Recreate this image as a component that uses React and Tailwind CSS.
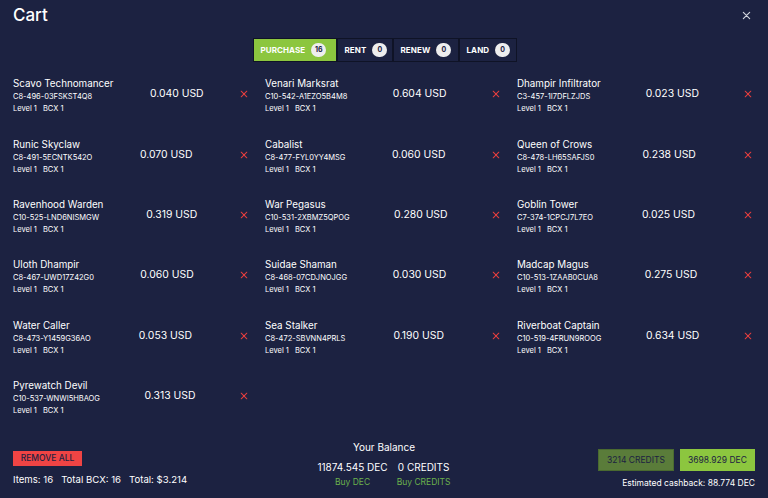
import React from "react";

const items = [
  ["Scavo Technomancer", "C8-496-03FSKST4Q8", "0.040"],
  ["Venari Marksrat", "C10-542-A1EZO5B4M8", "0.604"],
  ["Dhampir Infiltrator", "C3-457-1I7DFLZJDS", "0.023"],
  ["Runic Skyclaw", "C8-491-5ECNTK542O", "0.070"],
  ["Cabalist", "C8-477-FYL0YY4MSG", "0.060"],
  ["Queen of Crows", "C8-478-LH65SAFJS0", "0.238"],
  ["Ravenhood Warden", "C10-525-LND6NISMGW", "0.319"],
  ["War Pegasus", "C10-531-2XBMZ5QPOG", "0.280"],
  ["Goblin Tower", "C7-374-1CPCJ7L7EO", "0.025"],
  ["Uloth Dhampir", "C8-467-UWD17Z42G0", "0.060"],
  ["Suidae Shaman", "C8-468-07CDJNOJGG", "0.030"],
  ["Madcap Magus", "C10-513-1ZAAB0CUA8", "0.275"],
  ["Water Caller", "C8-473-Y1459G36AO", "0.053"],
  ["Sea Stalker", "C8-472-SBVNN4PRLS", "0.190"],
  ["Riverboat Captain", "C10-519-4FRUN9ROOG", "0.634"],
  ["Pyrewatch Devil", "C10-537-WNWI5HBAOG", "0.313"],
];

function XIcon({ className }) {
  return (
    <svg viewBox="0 0 10 10" className={className} fill="none" stroke="currentColor" strokeWidth="1.3" strokeLinecap="round">
      <path d="M1.5 1.5 L8.5 8.5 M8.5 1.5 L1.5 8.5" />
    </svg>
  );
}

function Tab({ label, count, active }) {
  return (
    <div
      className={
        "flex items-center gap-[6px] px-[7px] h-[24px] border border-[#0f1326] " +
        (active ? "bg-[#8cc63f]" : "bg-[#1c2241]")
      }
    >
      <span className="text-[8px] font-bold text-white tracking-[0.01em]">{label}</span>
      <span className="min-w-[15px] h-[14px] px-[3px] rounded-full bg-[#eeeeee] text-[#1c2241] text-[7px] font-bold flex items-center justify-center">
        {count}
      </span>
    </div>
  );
}

export default function App() {
  return (
    <div
      className="w-[768px] h-[498px] bg-[#1c2241] text-white flex flex-col overflow-hidden"
      style={{ fontFamily: "Inter, 'Liberation Sans', sans-serif" }}
    >
      <div className="flex items-center justify-between pl-[13px] pr-[17px] h-[32px]">
        <div className="text-[17px] font-medium leading-none">Cart</div>
        <XIcon className="w-[9px] h-[9px] text-[#d0d3dc]" />
      </div>

      <div className="flex justify-center mt-[7px] ml-[1px]">
        <div className="flex">
          <div className="w-[84px]"><Tab label="PURCHASE" count="16" active /></div>
          <div className="w-[56px]"><Tab label="RENT" count="0" /></div>
          <div className="w-[66px]"><Tab label="RENEW" count="0" /></div>
          <div className="w-[58px]"><Tab label="LAND" count="0" /></div>
        </div>
      </div>

      <div className="grid grid-cols-[238px_238px_238px] gap-x-[14px] px-[13px] mt-[15px] auto-rows-[60.3px]">
        {items.map(([name, code, price]) => (
          <div key={code} className="flex items-start">
            <div className="flex flex-col">
              <div className="text-[9.8px] leading-[13px] text-white">{name}</div>
              <div className="text-[7.5px] leading-[12px] text-white mt-[1px]">{code}</div>
              <div className="text-[7.5px] leading-[11px] text-white">
                Level 1<span className="ml-[6px]">BCX 1</span>
              </div>
            </div>
            <div className="flex-1 text-center text-[10.4px] leading-[13px] mt-[10px]">{price} USD</div>
            <XIcon className="w-[8px] h-[8px] text-[#e53e3e] mt-[13px] mr-[3px]" />
          </div>
        ))}
      </div>

      <div className="flex-1" />

      <div className="flex justify-between items-start px-[13px] h-[60px]">
        <div className="flex flex-col w-[260px] pt-[12px]">
          <div className="w-[69px] h-[15px] bg-[#ef4444] text-[#1c2241] text-[8.5px] font-medium flex items-center justify-center">
            REMOVE ALL
          </div>
          <div className="text-[9.6px] mt-[8px] leading-[12px]">
            Items: 16<span className="ml-[8px]">Total BCX: 16</span>
            <span className="ml-[8px]">Total: $3.214</span>
          </div>
        </div>

        <div className="flex flex-col items-center pt-[2px]">
          <div className="text-[10px] leading-[12px]">Your Balance</div>
          <div className="flex gap-[9px] mt-[8px]">
            <div className="flex flex-col items-center">
              <div className="text-[10px] leading-[12px]">11874.545 DEC</div>
              <div className="text-[8.5px] leading-[11px] mt-[4px] text-[#6ab04c]">Buy DEC</div>
            </div>
            <div className="flex flex-col items-center">
              <div className="text-[10px] leading-[12px]">0 CREDITS</div>
              <div className="text-[8.5px] leading-[11px] mt-[4px] text-[#6ab04c]">Buy CREDITS</div>
            </div>
          </div>
        </div>

        <div className="flex flex-col items-end w-[260px] pt-[10px]">
          <div className="flex gap-[6px]">
            <div className="w-[76px] h-[22px] bg-[#5a7c3a] border border-[#4a6a30] text-[#1c2241] text-[8.5px] flex items-center justify-center">
              3214 CREDITS
            </div>
            <div className="w-[75px] h-[22px] bg-[#8cc63f] text-[#1c2241] text-[8.5px] flex items-center justify-center">
              3698.929 DEC
            </div>
          </div>
          <div className="text-[8.5px] leading-[11px] mt-[7px]">Estimated cashback: 88.774 DEC</div>
        </div>
      </div>
    </div>
  );
}
